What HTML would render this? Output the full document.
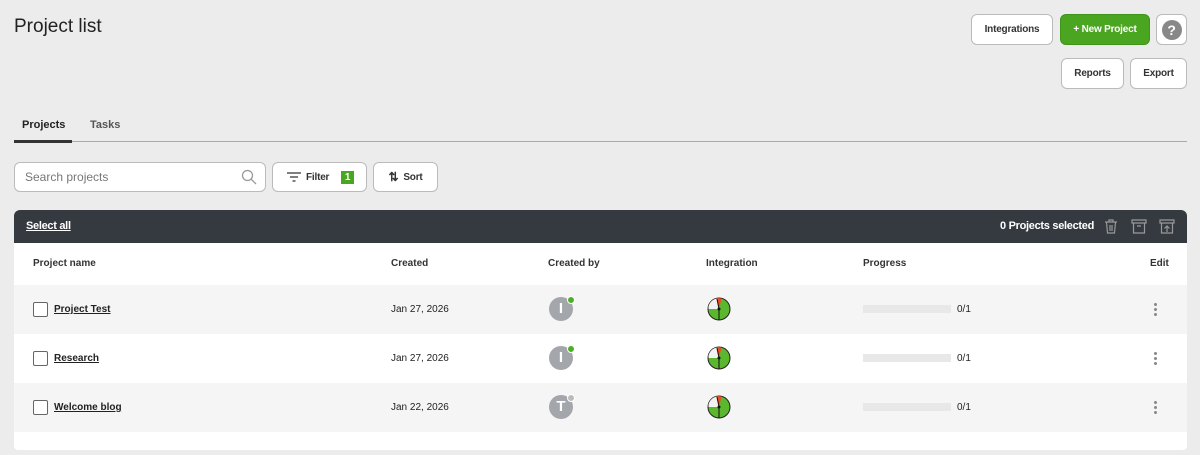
<!DOCTYPE html><html><head><style>
*{box-sizing:border-box;margin:0;padding:0}
body{width:1200px;height:455px;background:#ececec;font-family:"Liberation Sans",sans-serif;color:#222;position:relative;overflow:hidden;white-space:nowrap}
.a{position:absolute}
.btn{position:absolute;background:#fff;border:1px solid #bbb;border-radius:6px;font-size:10px;font-weight:bold;color:#333;display:flex;align-items:center;justify-content:center;letter-spacing:-0.2px}
.row{position:absolute;left:14px;width:1173px;height:49px;font-size:10px}
.cb{position:absolute;left:19px;top:17px;width:15px;height:15px;border:1px solid #666;background:#fff;border-radius:2px}
.nm{position:absolute;left:40px;top:19px;font-weight:bold;text-decoration:underline;font-size:10px}
.dt{position:absolute;left:377px;top:19px}
.av{position:absolute;left:535px;top:12px;width:24px;height:24px;border-radius:50%;background:#a3a6ab;color:#fff;font-weight:bold;font-size:15px;text-align:center;line-height:24px}
.av i{position:absolute;right:-2px;top:-1px;width:8px;height:8px;border-radius:50%;background:#4caf26;border:1.5px solid #fff}
.pi{position:absolute;left:693px;top:12px}
.bar{position:absolute;left:849px;top:20px;width:88px;height:8px;background:#e8e8e8}
.fr{position:absolute;left:943px;top:19px}
.dots{position:absolute;left:1140px;top:18px;width:3px;font-size:0}
.dots b{display:block;width:3px;height:3px;border-radius:50%;background:#888;margin-bottom:2px}
.h{position:absolute;top:48px;font-size:10px;font-weight:bold;color:#333}
</style></head><body>
<div class="a" style="left:14px;top:16px;font-size:19px;color:#222">Project list</div>
<div class="btn" style="left:971px;top:14px;width:82px;height:31px">Integrations</div>
<div class="btn" style="left:1060px;top:14px;width:90px;height:31px;background:#4aa520;border-color:#3f9419;color:#fff">+ New Project</div>
<div class="btn" style="left:1156px;top:14px;width:31px;height:31px"><span style="width:20px;height:20px;border-radius:50%;background:#888;color:#fff;font-size:14px;display:flex;align-items:center;justify-content:center">?</span></div>
<div class="btn" style="left:1061px;top:58px;width:63px;height:31px">Reports</div>
<div class="btn" style="left:1130px;top:58px;width:57px;height:31px">Export</div>
<div class="a" style="left:22px;top:119px;font-size:11px;font-weight:bold">Projects</div>
<div class="a" style="left:90px;top:119px;font-size:11px;font-weight:bold;color:#555">Tasks</div>
<div class="a" style="left:14px;top:141px;width:1173px;height:1px;background:#aaa"></div>
<div class="a" style="left:14px;top:140px;width:58px;height:3px;background:#333"></div>
<div class="btn" style="left:14px;top:162px;width:252px;height:30px;justify-content:flex-start;padding-left:10px;font-weight:normal;color:#777;font-size:12px;letter-spacing:0">Search projects
<svg class="a" style="right:8px;top:6px" width="16" height="16" viewBox="0 0 16 16"><circle cx="6.5" cy="6.5" r="5" fill="none" stroke="#999" stroke-width="1.3"/><path d="M10 10l5 5" stroke="#999" stroke-width="1.3"/></svg></div>
<div class="btn" style="left:272px;top:162px;width:95px;height:30px;justify-content:flex-start;padding-left:14px">
<svg width="14" height="10" viewBox="0 0 14 10"><path d="M0 1h14M3 5h8M5.5 9h3" stroke="#333" stroke-width="1.3"/></svg><span style="margin-left:5px">Filter</span><span class="a" style="left:68px;top:8px;background:#4aa520;color:#fff;width:13px;height:13px;display:flex;align-items:center;justify-content:center;font-size:10px">1</span></div>
<div class="btn" style="left:373px;top:162px;width:65px;height:30px"><span style="font-size:12px">⇅</span><span style="margin-left:5px">Sort</span></div>
<div class="a" style="left:14px;top:210px;width:1173px;height:240px;background:#fff;border-radius:6px 6px 4px 4px;overflow:hidden">
<div class="a" style="left:0;top:0;width:1173px;height:33px;background:#343a40"></div>
<div class="a" style="left:12px;top:10px;color:#fff;font-weight:bold;font-size:11px;text-decoration:underline;letter-spacing:-0.3px">Select all</div>
<div class="a" style="right:93px;top:10px;color:#fff;font-weight:bold;font-size:11px;letter-spacing:-0.3px">0 Projects selected</div>
<svg class="a" style="left:1090px;top:9px" width="14" height="15" viewBox="0 0 14 15"><path d="M1 3h12M5 3V1h4v2M2.5 3l1 11h7l1-11M6 6v6M8 6v6" fill="none" stroke="#999" stroke-width="1.2"/></svg>
<svg class="a" style="left:1117px;top:9px" width="16" height="15" viewBox="0 0 16 15"><path d="M1 1h14v3H1zM2.5 4v10h11V4M6 7h4" fill="none" stroke="#999" stroke-width="1.2"/></svg>
<svg class="a" style="left:1145px;top:9px" width="16" height="15" viewBox="0 0 16 15"><path d="M1 1h14v3H1zM2.5 4v10h11V4M8 13V7M5.5 9.5L8 7l2.5 2.5" fill="none" stroke="#999" stroke-width="1.2"/></svg>
<div class="h" style="left:19px">Project name</div>
<div class="h" style="left:377px">Created</div>
<div class="h" style="left:534px">Created by</div>
<div class="h" style="left:692px">Integration</div>
<div class="h" style="left:849px">Progress</div>
<div class="h" style="left:1136px">Edit</div>
</div>
<svg width="0" height="0" style="position:absolute"><defs><g id="clk"><circle cx="12" cy="12" r="11" fill="#5bb82e" stroke="#222" stroke-width="1"/><path d="M12 12L12 1.2A10.8 10.8 0 0 0 1.5 9.5L1.5 12Z" fill="#f2f2f2"/><path d="M12 12L9.5 1.5A10.8 10.8 0 0 1 14.5 1.4Z" fill="#f04a1f"/><path d="M12 12L12 23M12 12L10 2" stroke="#111" stroke-width="1"/><circle cx="12" cy="12" r="1.5" fill="#111"/></g></defs></svg>
<div class="row" style="top:285px;background:#f5f5f5"><div class="cb"></div><div class="nm">Project Test</div><div class="dt">Jan 27, 2026</div><div class="av">I<i></i></div><svg class="pi" width="24" height="24"><use href="#clk"/></svg><div class="bar"></div><div class="fr">0/1</div><div class="dots"><b></b><b></b><b></b></div></div>
<div class="row" style="top:334px;background:#fff"><div class="cb"></div><div class="nm">Research</div><div class="dt">Jan 27, 2026</div><div class="av">I<i></i></div><svg class="pi" width="24" height="24"><use href="#clk"/></svg><div class="bar"></div><div class="fr">0/1</div><div class="dots"><b></b><b></b><b></b></div></div>
<div class="row" style="top:383px;background:#f5f5f5"><div class="cb"></div><div class="nm">Welcome blog</div><div class="dt">Jan 22, 2026</div><div class="av">T<i style="background:#bbb"></i></div><svg class="pi" width="24" height="24"><use href="#clk"/></svg><div class="bar"></div><div class="fr">0/1</div><div class="dots"><b></b><b></b><b></b></div></div>
</body></html>
